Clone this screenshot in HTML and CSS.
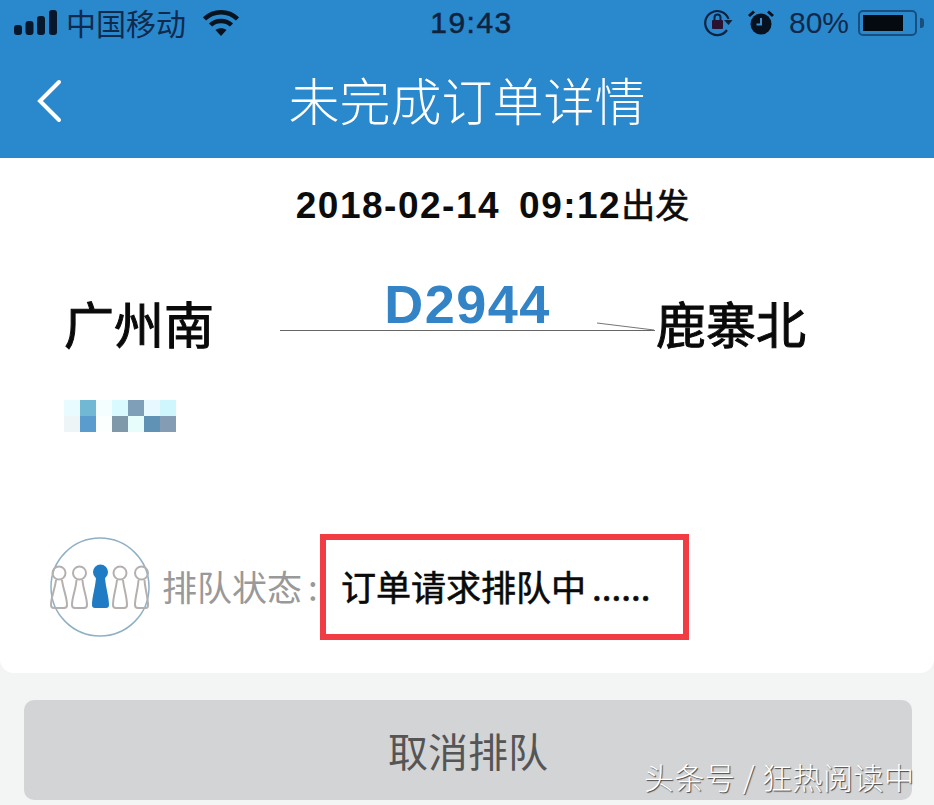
FILE: index.html
```html
<!DOCTYPE html>
<html lang="zh">
<head>
<meta charset="utf-8">
<title>未完成订单详情</title>
<link rel="stylesheet" href="styles.css">
</head>
<body>
<div class="page">
  <header class="header">
    <div class="status">
      <div class="status-left">
        <svg class="signal" width="44" height="26" viewBox="0 0 44 26"><g fill="#07182c"><rect x="0" y="15" width="8" height="10" rx="3"/><rect x="11.500" y="11" width="8" height="14" rx="3"/><rect x="23" y="6" width="8" height="19" rx="3"/><rect x="35" y="0" width="8" height="25" rx="3"/></g></svg>
        <span class="carrier">中国移动</span>
        <svg class="wifi" width="36" height="28" viewBox="0 0 36 28"><g fill="none" stroke="#07131f" stroke-width="4.5"><path d="M1.5 10C10.5 1 25.5 1 34.5 10"/><path d="M7.5 16C13 10.5 23 10.5 28.500 16"/></g><path d="M12.500 21C15.500 18.500 20.500 18.500 23.500 21L18 27Z" fill="#07131f"/></svg>
      </div>
      <div class="clock">19:43</div>
      <div class="status-right">
        <svg class="lock" width="30" height="30" viewBox="0 0 30 30"><path d="M24 22A12 12 0 1 1 25.500 11" fill="none" stroke="#0b2240" stroke-width="2.200"/><path d="M21 12H29.500L25.500 17Z" fill="#0b2240"/><rect x="9" y="12" width="11" height="9" rx="1" fill="#2b1230"/><path d="M11.500 12V9.500A3 3 0 0 1 17.500 9.500V12" fill="none" stroke="#0b2240" stroke-width="2"/></svg>
        <svg class="alarm" width="26" height="28" viewBox="0 0 26 28"><circle cx="13" cy="15" r="10.500" fill="#06121f"/><path d="M1 7L6 2.500M25 7L20 2.500" stroke="#06121f" stroke-width="3"/><path d="M13 9V15.500H8.500" fill="none" stroke="#3d8fcc" stroke-width="2"/></svg>
        <span class="battery-text">80%</span>
        <div class="battery"><div class="battery-level"></div></div>
        <div class="battery-tip"></div>
      </div>
    </div>
    <div class="nav">
      <svg class="back" width="28" height="44" viewBox="0 0 28 44"><path d="M23 3L4 22L23 41" fill="none" stroke="#fff" stroke-width="4" stroke-linecap="round"/></svg>
      <h1 class="title">未完成订单详情</h1>
    </div>
  </header>

  <main class="card">
    <div class="departure">2018-02-14<span class="gap"></span>09:12<span class="suffix">出发</span></div>
    <div class="route">
      <span class="station">广州南</span>
      <div class="track">
        <span class="train">D2944</span>
        <svg class="arrow" width="60" height="10" viewBox="0 0 60 10"><path d="M1 1L58 8" stroke="#777" stroke-width="1.200" fill="none"/></svg>
      </div>
      <span class="station">鹿寨北</span>
    </div>
    <div class="mosaic">
      <i class="c1"></i><i class="c2"></i><i class="c3"></i><i class="c4"></i><i class="c5"></i><i class="c6"></i><i class="c7"></i>
      <i class="c8"></i><i class="c9"></i><i class="c10"></i><i class="c11"></i><i class="c12"></i><i class="c13"></i><i class="c14"></i>
    </div>
    <div class="queue">
      <svg class="queue-icon" width="100" height="100" viewBox="0 0 100 100">
        <circle cx="50" cy="50" r="49" fill="#fff" stroke="#8fb0c4" stroke-width="1.500"/>
        <g fill="none" stroke="#b5b0ae" stroke-width="2">
          <circle cx="9" cy="36" r="6.500"/><path d="M6 43C5 52 1 60 1 68Q1 71 4 71H14Q17 71 17 68C17 60 13 52 12 43"/>
          <circle cx="29.500" cy="36" r="6.500"/><path d="M26.500 43C26 52 22 60 22 68Q22 71 25 71H34Q37 71 37 68C37 60 33 52 32.500 43"/>
          <circle cx="70" cy="36" r="6.500"/><path d="M67 43C66 52 63 60 63 68Q63 71 66 71H74Q77 71 77 68C77 60 74 52 73 43"/>
          <circle cx="91.500" cy="36" r="6.500"/><path d="M88.500 43C88 52 85 60 85 68Q85 71 88 71H96Q98 71 98 68C98 60 95 52 94.500 43"/>
        </g>
        <circle cx="50.500" cy="35" r="7.500" fill="#1f7cc4"/>
        <path d="M46 41H55C56 52 59 60 59 68Q59 71 56 71H45Q42 71 42 68C42 60 45 52 46 41Z" fill="#1f7cc4"/>
      </svg>
      <span class="queue-label">排队状态<span class="colon">:</span></span>
      <div class="queue-box">订单请求排队中<span class="dots">......</span></div>
    </div>
  </main>

  <div class="actions">
    <button class="cancel" type="button">取消排队</button>
  </div>
  <div class="watermark">头条号 / 狂热阅读中</div>
</div>
</body>
</html>
```
FILE: styles.css
```css
* { box-sizing: border-box; }
html, body { margin: 0; padding: 0; }
body {
  width: 934px;
  height: 805px;
  overflow: hidden;
  background: #f3f4f4;
  font-family: "Noto Sans CJK SC", "Noto Sans", sans-serif;
}
.page { position: relative; width: 934px; height: 805px; overflow: hidden; }

.header { height: 158px; background: #2a88cd; }
.status {
  height: 46px;
  display: grid;
  grid-template-columns: 1fr auto 1fr;
  align-items: center;
  color: #10294a;
  padding: 0 10px 0 14px;
}
.status-left { display: flex; align-items: center; }
.signal { margin-right: 8px; }
.carrier { font-size: 30px; line-height: 40px; width: 120px; color: #0f2a4c; padding-bottom: 3px; }
.wifi { margin-left: 17px; }
.clock {
  font-family: "Liberation Sans", sans-serif;
  font-size: 30px;
  letter-spacing: 1.5px;
  color: #10233d;
  padding-left: 5px;
  -webkit-text-stroke: 0.5px #10233d;
}
.status-right { display: flex; align-items: center; justify-content: flex-end; }
.lock { margin-right: 15px; }
.alarm { margin-right: 15px; }
.battery-text {
  font-family: "Liberation Sans", sans-serif;
  font-size: 30px;
  color: #10294a;
  margin-right: 9px;
}
.battery {
  width: 59px;
  height: 26px;
  border: 2px solid #17507f;
  border-radius: 5px;
  padding: 3px;
}
.battery-level { width: 40px; height: 100%; background: #050a10; }
.battery-tip {
  width: 4px;
  height: 10px;
  margin-left: 3px;
  background: #17507f;
  border-radius: 0 3px 3px 0;
}

.nav { height: 112px; display: flex; align-items: center; padding: 0 0 0 36px; margin-top: -1px; }
.back { flex: none; }
.title {
  margin: 0;
  flex: 1;
  padding: 0 64px 4px 0;
  text-align: center;
  color: #fff;
  font-size: 51px;
  font-weight: 300;
  line-height: 68px;
}

.card {
  height: 515px;
  background: #fff;
  border-radius: 0 0 14px 14px;
  display: flex;
  flex-direction: column;
}
.departure {
  margin-top: 23px;
  height: 46px;
  flex: none;
  padding-left: 51px;
  display: flex;
  justify-content: center;
  align-items: baseline;
  font-family: "Liberation Sans", "Noto Sans CJK SC", sans-serif;
  font-size: 37px;
  font-weight: 700;
  letter-spacing: 1.5px;
  line-height: 46px;
  color: #0c0c0c;
}
.gap { width: 19px; }
.suffix {
  font-family: "Noto Sans CJK SC", sans-serif;
  font-size: 34px;
  font-weight: 400;
  letter-spacing: 0;
  -webkit-text-stroke: 0.6px #0c0c0c;
}
.route {
  margin-top: 59px;
  display: flex;
  align-items: center;
  padding-left: 64px;
  height: 72px;
}
.station {
  font-size: 50px;
  font-weight: 400;
  -webkit-text-stroke: 1px #0a0a0a;
  line-height: 72px;
  color: #0a0a0a;
  width: 150px;
  flex: none;
}
.track {
  position: relative;
  width: 375px;
  margin: 16px 1px 0 66px;
  height: 1px;
  background: #666;
}
.train {
  position: absolute;
  left: 0;
  right: 0;
  top: -51px;
  text-align: center;
  font-family: "Liberation Sans", sans-serif;
  font-weight: 700;
  font-size: 54px;
  line-height: 50px;
  color: #3384c6;
  letter-spacing: 1.5px;
}
.arrow { position: absolute; right: -1px; top: -8px; }
.mosaic {
  margin: 42px 0 0 64px;
  width: 112px;
  height: 32px;
  display: grid;
  grid-template-columns: repeat(7, 16px);
  grid-template-rows: repeat(2, 16px);
}
.mosaic i { display: block; }
.c1 { background: #e8fbff; }
.c2 { background: #70b8d3; }
.c3 { background: #f4fdff; }
.c4 { background: #d9fbff; }
.c5 { background: #7f9fb8; }
.c6 { background: #e8f8ff; }
.c7 { background: #d0f6fd; }
.c8 { background: #eef5f6; }
.c9 { background: #5a9ccd; }
.c10 { background: #fbfffd; }
.c11 { background: #8099aa; }
.c12 { background: #e6fdfb; }
.c13 { background: #6092b6; }
.c14 { background: #859db4; }

.queue {
  margin-top: 102px;
  display: flex;
  align-items: center;
  height: 106px;
  padding-left: 50px;
}
.queue-icon { flex: none; }
.queue-label {
  width: 158px;
  margin-left: 12px;
  flex: none;
  font-size: 35px;
  line-height: 48px;
  padding-bottom: 3px;
  color: #999;
  white-space: nowrap;
}
.colon { margin-left: 6px; }
.queue-box {
  width: 369px;
  height: 106px;
  border: 6px solid #f23c43;
  padding: 0 0 3px 15px;
  display: flex;
  align-items: center;
  font-size: 35px;
  font-weight: 400;
  -webkit-text-stroke: 0.6px #0a0a0a;
  color: #0a0a0a;
  white-space: nowrap;
}
.dots { margin-left: 6px; }

.actions { padding: 27px 22px 0 24px; }
.cancel {
  display: block;
  width: 888px;
  height: 100px;
  border: 0;
  border-radius: 10px;
  background: #d3d4d6;
  color: #555;
  font-family: "Noto Sans CJK SC", sans-serif;
  font-size: 40px;
  padding: 0;
}
.watermark {
  position: absolute;
  left: 644px;
  top: 754px;
  font-size: 30px;
  letter-spacing: 0.5px;
  line-height: 44px;
  white-space: nowrap;
  color: #fff;
  font-weight: 300;
  text-shadow: 1px 1px 1px #444;
}
```
